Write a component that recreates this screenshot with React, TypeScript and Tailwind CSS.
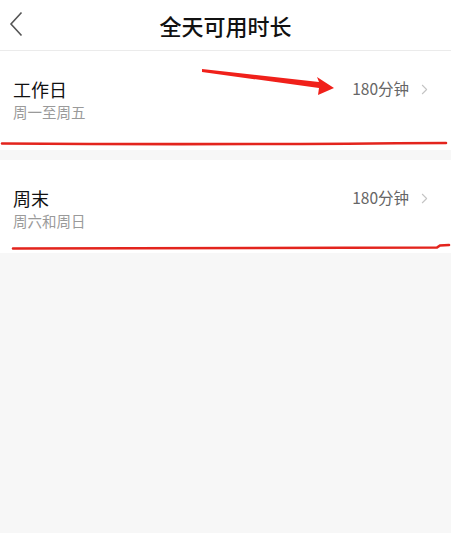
import { ChevronRight } from "lucide-react";

const font = { fontFamily: '"Noto Sans CJK SC", "Noto Sans", sans-serif' };

type Row = { title: string; sub: string; value: string; h: string };

const rows: Row[] = [
  { title: "工作日", sub: "周一至周五", value: "180分钟", h: "h-[99px]" },
  { title: "周末", sub: "周六和周日", value: "180分钟", h: "h-[93px]" },
];

function DurationRow({ row }: { row: Row }) {
  return (
    <div className={`bg-white ${row.h} flex items-start pl-[13px] pr-[18px] pt-[25px]`}>
      <div className="flex-1">
        <div className="text-[18px] leading-[26px] text-[#111]">{row.title}</div>
        <div className="text-[14.5px] leading-[20px] text-[#9a9a9a]">{row.sub}</div>
      </div>
      <div className="flex items-center h-[26px] gap-[7px]">
        <span className="text-[15.5px] text-[#666]">{row.value}</span>
        <ChevronRight className="w-[17px] h-[17px] text-[#c4c4c4]" strokeWidth={1.5} />
      </div>
    </div>
  );
}

export default function App() {
  return (
    <div className="relative w-[451px] h-[533px] bg-[#f7f7f7] overflow-hidden" style={font}>
      {/* Header */}
      <div className="h-[51px] bg-white border-b border-[#ebebeb] flex items-center relative">
        <svg className="absolute left-[9px] top-[11px]" width="14" height="26" viewBox="0 0 14 26">
          <path d="M12.5 1.5 L2 13 L12.5 24.5" fill="none" stroke="#555" strokeWidth="1.6" />
        </svg>
        <div className="w-full text-center text-[22px] font-medium text-[#111] leading-[50px]">全天可用时长</div>
      </div>

      <DurationRow row={rows[0]} />
      <div className="h-[10px]" />
      <DurationRow row={rows[1]} />

      {/* Annotation marks */}
      <svg className="absolute inset-0 pointer-events-none" width="451" height="533" viewBox="0 0 451 533">
        <polygon points="202,69 319,82 317,77 334,88 318,95 319,88 202,72" fill="#f0201a" />
        <path d="M2 143.5 Q200 145 446 143" fill="none" stroke="#e3241d" strokeWidth="2.6" strokeLinecap="round" />
        <path d="M13 248.5 Q220 248 437 247.5 L440 245.5 L449 245" fill="none" stroke="#e3241d" strokeWidth="2.6" strokeLinecap="round" />
      </svg>
    </div>
  );
}
